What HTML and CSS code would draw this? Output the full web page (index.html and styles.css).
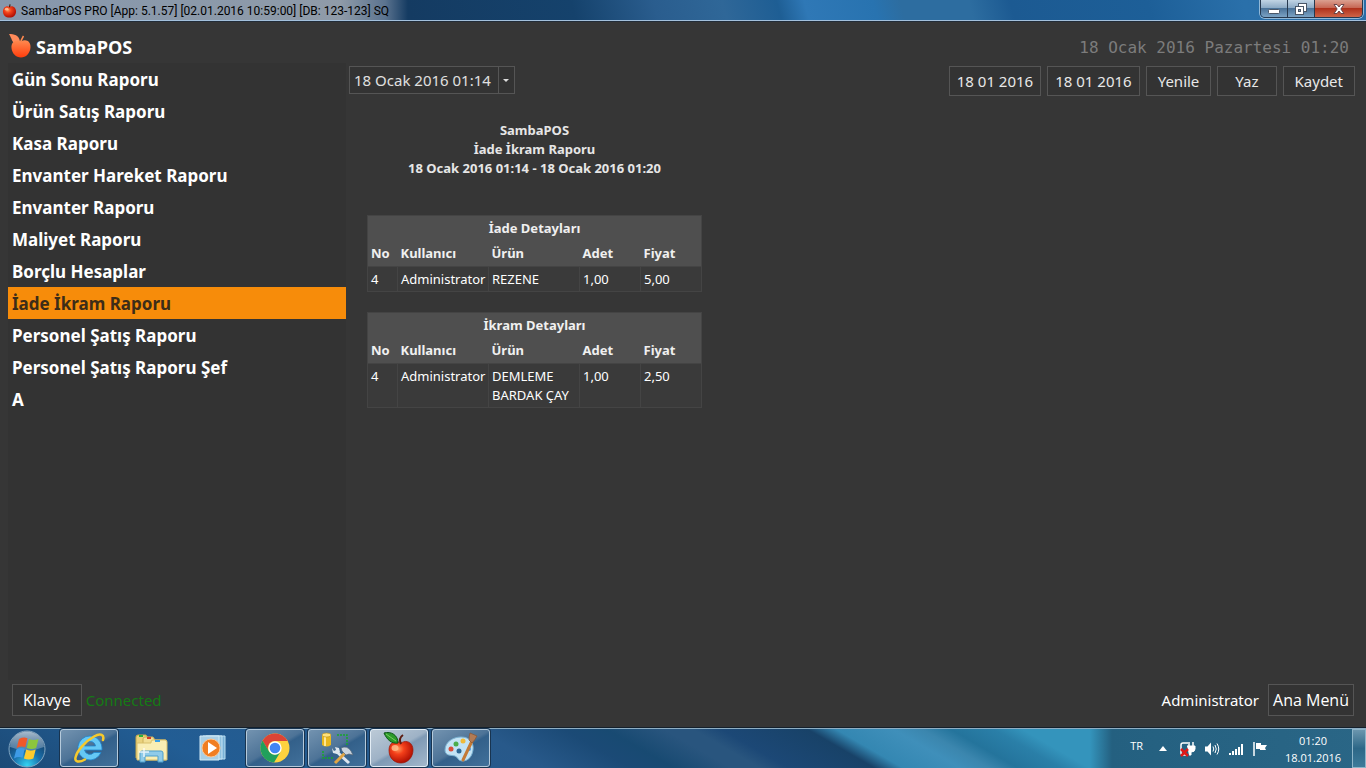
FILE: index.html
```html
<!DOCTYPE html>
<html lang="tr">
<head>
    <meta charset="UTF-8">
    <meta name="viewport" content="width=device-width, initial-scale=1.0">
    <title>SambaPOS PRO</title>
    <link rel="stylesheet" href="styles.css">
</head>
<body>

    <!-- Shared apple gradients -->
    <svg class="defs" width="0" height="0" aria-hidden="true">
        <defs>
            <radialGradient id="appleRed" cx="0.38" cy="0.35" r="0.7">
                <stop offset="0" stop-color="#ff9a5c"/>
                <stop offset="0.35" stop-color="#f4401a"/>
                <stop offset="1" stop-color="#a80a00"/>
            </radialGradient>
            <linearGradient id="appleOrange" x1="0" y1="0" x2="0" y2="1">
                <stop offset="0" stop-color="#ff8a50"/>
                <stop offset="1" stop-color="#ff3d0c"/>
            </linearGradient>
        </defs>
    </svg>

    <!-- Window Title Bar -->
    <div class="title-bar">
        <svg class="title-icon" viewBox="0 0 16 16" aria-hidden="true">
            <path d="M8 3.500C5 1.500 1 4 1 8.500c0 4 3 6.500 7 6.500s7-2.500 7-6.500C15 4 11 1.500 8 3.500z" fill="url(#appleRed)"/>
            <path d="M8 4L8.600 1" stroke="#4a1a08" stroke-width="1.200"/>
            <ellipse cx="5" cy="6" rx="2" ry="1.400" fill="#ffc9a0" opacity=".8"/>
        </svg>
        <span class="title-text">SambaPOS PRO [App: 5.1.57] [02.01.2016 10:59:00] [DB: 123-123] SQ</span>
        <div class="window-buttons">
            <button class="win-btn" aria-label="Simge durumuna küçült">
                <svg width="12" height="12" viewBox="0 0 12 12"><rect x=".5" y="6.500" width="11" height="4" rx="1" fill="#fff" stroke="#4a5768"/></svg>
            </button>
            <button class="win-btn" aria-label="Geri yükle">
                <svg width="12" height="12" viewBox="0 0 12 12"><rect x="3.500" y=".5" width="8" height="8" fill="#fff" stroke="#4a5768"/><rect x=".5" y="3.500" width="8" height="8" fill="#fff" stroke="#4a5768"/><rect x="3.500" y="6.500" width="2" height="2" fill="#8fa9c0" stroke="#4a5768"/></svg>
            </button>
            <button class="win-btn close" aria-label="Kapat">
                <svg width="12" height="12" viewBox="0 0 12 12"><path d="M1 1.500h3l2 2.500 2-2.500h3L7.800 6l3.200 4.500H8L6 8l-2 2.500H1L4.200 6z" fill="#fff" stroke="#5c3a40" stroke-width=".9"/></svg>
            </button>
        </div>
    </div>

    <!-- Application -->
    <div class="app">
        <header class="app-header">
            <div class="brand">
                <svg class="brand-icon" viewBox="0 0 24 26" aria-hidden="true">
                    <path d="M1 0c5 0 10 1 11 7.500L7 10C4 8 4 5 1 0z" fill="#ff8a5a"/>
                    <path d="M12.500 9C13 6 14 4.500 15.500 2" stroke="#ff8a50" stroke-width="1.500" fill="none"/>
                    <path d="M13 7.500c5-3 10 0 9.500 6-.5 6-4.500 10-9.500 10s-9-4-9.500-9.500C3 8 8 5 13 7.500z" fill="url(#appleOrange)"/>
                </svg>
                <span>SambaPOS</span>
            </div>
            <div class="clock">18 Ocak 2016 Pazartesi 01:20</div>
        </header>

        <div class="workspace">
            <nav class="report-list">
                <a href="#">Gün Sonu Raporu</a>
                <a href="#">Ürün Satış Raporu</a>
                <a href="#">Kasa Raporu</a>
                <a href="#">Envanter Hareket Raporu</a>
                <a href="#">Envanter Raporu</a>
                <a href="#">Maliyet Raporu</a>
                <a href="#">Borçlu Hesaplar</a>
                <a href="#" class="active">İade İkram Raporu</a>
                <a href="#">Personel Şatış Raporu</a>
                <a href="#">Personel Şatış Raporu Şef</a>
                <a href="#">A</a>
            </nav>

            <main class="content">
                <div class="toolbar">
                    <div class="period">
                        <select aria-label="Dönem">
                            <option>18 Ocak 2016 01:14</option>
                        </select>
                        <span class="period-arrow"></span>
                    </div>
                    <div class="actions">
                        <button class="btn date">18 01 2016</button>
                        <button class="btn date">18 01 2016</button>
                        <button class="btn">Yenile</button>
                        <button class="btn wide">Yaz</button>
                        <button class="btn">Kaydet</button>
                    </div>
                </div>

                <!-- Report -->
                <section class="report">
                    <div class="report-title">
                        <div>SambaPOS</div>
                        <div>İade İkram Raporu</div>
                        <div>18 Ocak 2016 01:14 - 18 Ocak 2016 01:20</div>
                    </div>

                    <table>
                        <colgroup><col class="c-no"><col class="c-mid"><col class="c-mid"><col class="c-num"><col class="c-num"></colgroup>
                        <thead>
                            <tr><th colspan="5" class="caption">İade Detayları</th></tr>
                            <tr><th>No</th><th>Kullanıcı</th><th>Ürün</th><th>Adet</th><th>Fiyat</th></tr>
                        </thead>
                        <tbody>
                            <tr><td>4</td><td>Administrator</td><td>REZENE</td><td>1,00</td><td>5,00</td></tr>
                        </tbody>
                    </table>

                    <table>
                        <colgroup><col class="c-no"><col class="c-mid"><col class="c-mid"><col class="c-num"><col class="c-num"></colgroup>
                        <thead>
                            <tr><th colspan="5" class="caption">İkram Detayları</th></tr>
                            <tr><th>No</th><th>Kullanıcı</th><th>Ürün</th><th>Adet</th><th>Fiyat</th></tr>
                        </thead>
                        <tbody>
                            <tr><td>4</td><td>Administrator</td><td>DEMLEME<br>BARDAK ÇAY</td><td>1,00</td><td>2,50</td></tr>
                        </tbody>
                    </table>
                </section>
            </main>
        </div>

        <footer class="app-footer">
            <button class="btn large">Klavye</button>
            <span class="status">Connected</span>
            <span class="user">Administrator</span>
            <button class="btn large main-menu">Ana Menü</button>
        </footer>
    </div>

    <!-- Taskbar -->
    <div class="taskbar">
        <button class="start" aria-label="Başlat">
            <svg width="40" height="38" viewBox="0 0 40 38">
                <defs>
                    <radialGradient id="orb" cx="0.5" cy="0.95" r="0.85">
                        <stop offset="0" stop-color="#35d4f2"/>
                        <stop offset="0.45" stop-color="#1a70ac"/>
                        <stop offset="1" stop-color="#14375c"/>
                    </radialGradient>
                    <linearGradient id="orbShine" x1="0" y1="0" x2="0" y2="1">
                        <stop offset="0" stop-color="#c3d4e2" stop-opacity=".85"/>
                        <stop offset="1" stop-color="#7c9fbd" stop-opacity=".5"/>
                    </linearGradient>
                </defs>
                <circle cx="20" cy="19" r="18" fill="url(#orb)" stroke="#83a7c2" stroke-width="1"/>
                <path d="M3 17a17 15.500 0 0 1 34 0q-17 7-34 0z" fill="url(#orbShine)"/>
                <path d="M12 9q4.500-2.500 8.500-.8l-2.300 9q-4.200-1.700-8.500.8z" fill="#f0592a"/>
                <path d="M22 9q4.500 2 9.500 0l-2.300 9q-4.500 2-9.500 0z" fill="#8cc63e"/>
                <path d="M9.300 19.500q4.500-2.500 8.500-.8l-2.300 9q-4.200-1.500-8.500.8z" fill="#3e9be6"/>
                <path d="M19.200 19.500q4.500 2 9.500 0l-2.300 9q-4.500 2-9.500 0z" fill="#ffcb2e"/>
            </svg>
        </button>

        <div class="tasks">
            <button class="task open" aria-label="Internet Explorer">
                <svg width="32" height="32" viewBox="0 0 32 32">
                    <path d="M17 4a12 12 0 1 0 11 16.500h-7a5.500 5.500 0 0 1-9.500-2.500H29C29.500 10 24 4 17 4zm0 5.500a5.500 5.500 0 0 1 5.500 4.500h-11A5.500 5.500 0 0 1 17 9.500z" fill="#65c8f5" stroke="#2187cf" stroke-width=".8"/>
                    <path d="M30 8C31.500 3 28 .5 21 4.500 12 9.500 4 19 2.500 25.500 1.500 30 6 31 12 27.500" fill="none" stroke="#f6c92c" stroke-width="2.500" stroke-linecap="round"/>
                </svg>
            </button>
            <button class="task" aria-label="Dosya Gezgini">
                <svg width="34" height="30" viewBox="0 0 34 30">
                    <path d="M2 4q0-2 2-2h8l2 3v20H2z" fill="#ead27c" stroke="#c4a649"/>
                    <path d="M9 6q0-2 2-2h8l2 3h11v20H9z" fill="#f2df95" stroke="#cbb05a"/>
                    <path d="M17 9q0-2 2-2h12q2 0 2 2v18H3V10h14z" fill="#f9eeb4" stroke="#d9c06c"/>
                    <rect x="5" y="2" width="4" height="2" fill="#28b23c"/>
                    <rect x="13" y="4" width="4" height="2" fill="#d43a28"/>
                    <rect x="21" y="7" width="5" height="2" fill="#3aa0e6"/>
                    <path d="M6 29v-9q0-2 2-2h19q2 0 2 2v9h-5v-6H11v6z" fill="#8fcbe9" stroke="#4f9fcb"/>
                    <path d="M10 15v9M5 19h10" stroke="#fff" stroke-width="1.500" opacity=".8"/>
                </svg>
            </button>
            <button class="task" aria-label="Media Player">
                <svg width="30" height="28" viewBox="0 0 30 28">
                    <path d="M8 2h19v23H8z" fill="#79b1d6" stroke="#b9def2"/>
                    <path d="M5 2h19v23H5z" fill="#8dc0df" stroke="#c4e4f5"/>
                    <path d="M2 2h19v24H2z" fill="#a8cfe6" stroke="#d2ebf7"/>
                    <circle cx="13" cy="14" r="9" fill="#f07e22" stroke="#fbc795"/>
                    <path d="M10 8l9 6-9 6z" fill="#fff"/>
                </svg>
            </button>
            <button class="task open" aria-label="Chrome">
                <svg width="30" height="30" viewBox="0 0 30 30">
                    <circle cx="15" cy="15" r="14.500" fill="#fdd23f"/>
                    <path d="M2.500 7.500A14.500 14.500 0 0 1 27.600 8H15a7 7 0 0 0-6.500 10z" fill="#db4437"/>
                    <path d="M2.500 7.500A14.500 14.500 0 0 0 14 29.500l6.500-10.800a7 7 0 0 1-11.700-.7z" fill="#21a05c"/>
                    <circle cx="15" cy="15" r="6.700" fill="#fff"/>
                    <circle cx="15" cy="15" r="5.300" fill="#4285f4"/>
                </svg>
            </button>
            <button class="task open" aria-label="Yapılandırma">
                <svg width="34" height="34" viewBox="0 0 34 34">
                    <path d="M17 4h10v11M3 20v7h11" fill="none" stroke="#19a52c" stroke-width="1.500" stroke-dasharray="2 1"/>
                    <path d="M2 4v10q4.500 3 9 0V4z" fill="#e9b81f"/>
                    <path d="M4 5v10h2V5z" fill="#ffe793"/>
                    <ellipse cx="6.500" cy="4" rx="4.500" ry="2" fill="#ffe27b" stroke="#b98c14" stroke-width=".6"/>
                    <path d="M17 21l12 11" stroke="#dce5ee" stroke-width="3"/>
                    <path d="M12 17l1 5 4 1 3-2-1-4-4-1 1 3-2 1z" fill="#dce5ee"/>
                    <path d="M26 21L15 32" stroke="#e0a545" stroke-width="3"/>
                    <path d="M21 17q6-3 10 3l2 4-4-1-3 1-4-4z" fill="#c9d4de" stroke="#536475" stroke-width=".7"/>
                </svg>
            </button>
            <button class="task open current" aria-label="SambaPOS">
                <svg width="32" height="34" viewBox="0 0 32 34">
                    <path d="M18 12C12 8 6 12 6 19c0 8 5 13 12 13s12-6 12-13c0-7-6-11-12-7z" fill="url(#appleRed)" stroke="#9c1405" stroke-width=".7"/>
                    <path d="M18 13C16 9 17 6 20 4" stroke="#5c1c10" stroke-width="2" fill="none"/>
                    <path d="M1 2c7-2 14 2 14 10C9 13 4 9 1 2z" fill="#2c9a2b" stroke="#0c5315"/>
                    <path d="M3 3l10 7" stroke="#79ce60"/>
                    <ellipse cx="12" cy="17" rx="3.500" ry="3" fill="#ffc08e" opacity=".8"/>
                </svg>
            </button>
            <button class="task open" aria-label="Paint">
                <svg width="34" height="32" viewBox="0 0 34 32">
                    <path d="M1 18C1 10 9 5 17 5c9 0 13 6 12 13-1 6-4 11-11 11-4 0-4-4-7-5-4-1-10 0-10-6z" fill="#c3e3f5" stroke="#7bb3d3"/>
                    <circle cx="7" cy="17" r="2.500" fill="#da4d3b"/>
                    <circle cx="12" cy="12" r="2.500" fill="#4cad4c"/>
                    <circle cx="19" cy="9" r="2.500" fill="#f0ba39"/>
                    <circle cx="15" cy="19" r="2.500" fill="#2c6694"/>
                    <circle cx="25" cy="17" r="2" fill="#4b9be0"/>
                    <path d="M28 9L19 28" stroke="#c47a36" stroke-width="3" stroke-linecap="round"/>
                    <path d="M28 11l-3-3q0-4 1-7l7 3q-2 4-5 7z" fill="#b27b55" stroke="#8a5431" stroke-width=".7"/>
                </svg>
            </button>
        </div>

        <div class="tray">
            <span class="lang">TR</span>
            <svg class="tray-more" width="8" height="5" viewBox="0 0 8 5" aria-hidden="true"><path d="M4 0l4 5H0z" fill="#fff"/></svg>
            <svg width="16" height="16" viewBox="0 0 16 16" aria-hidden="true">
                <path d="M8 2H3q-2 0-2 2v8q0 2 2 2h5" fill="none" stroke="#fff" stroke-width="1.500"/>
                <path d="M9 1v4M13 1v4" stroke="#fff" stroke-width="1.500"/>
                <path d="M7 5h8v3q0 3-4 3v3H9" fill="#fff" stroke="#fff"/>
                <path d="M1 8l7 7M8 8l-7 7" stroke="#e01818" stroke-width="2.500"/>
            </svg>
            <svg width="16" height="16" viewBox="0 0 16 16" aria-hidden="true">
                <path d="M1 5.500h2.500L7 1.500v13l-3.500-4H1z" fill="#fff"/>
                <path d="M9 5.500q1.500 2.500 0 5M11 4q2.500 4 0 8M13 2.500q3.500 5.500 0 11" fill="none" stroke="#fff"/>
            </svg>
            <svg width="16" height="16" viewBox="0 0 16 16" aria-hidden="true">
                <path d="M1 12h2v2H1zM4 10h2v4H4zM7 8h2v6H7zM10 6h2v8h-2zM13 3h2v11h-2z" fill="#fff"/>
            </svg>
            <svg width="16" height="16" viewBox="0 0 16 16" aria-hidden="true">
                <path d="M2 1v14" stroke="#fff" stroke-width="1.500"/>
                <path d="M4 2h5v2h6l-2 3 1 2H8V8H4z" fill="#fff"/>
            </svg>
            <div class="tray-clock">
                <div>01:20</div>
                <div>18.01.2016</div>
            </div>
            <button class="show-desktop" aria-label="Masaüstünü göster"></button>
        </div>
    </div>

</body>
</html>
```

FILE: styles.css
```css
* {
    box-sizing: border-box;
}

body {
    font-family: "Noto Sans", "Open Sans", sans-serif;
    margin: 0;
    height: 100vh;
    display: flex;
    flex-direction: column;
    background: #363636;
    color: #fff;
    overflow: hidden;
}

button,
select {
    font-family: inherit;
    color: inherit;
    margin: 0;
    padding: 0;
}

svg {
    display: block;
    flex: none;
}

.defs {
    position: absolute;
}

/* Window Title Bar */
.title-bar {
    display: flex;
    align-items: flex-start;
    height: 21px;
    flex: none;
    padding: 0 3px 0 2px;
    border-bottom: 1px solid #a3c0dc;
    background:
        linear-gradient(to right, rgba(140, 156, 176, 0.95), rgba(150, 160, 172, 0.95) 340px, rgba(110, 130, 155, 0.8) 385px, rgba(20, 59, 98, 0) 408px),
        linear-gradient(75deg, #143b62 0, #143b62 30%, #15426c 42%, #2a5d8e 48%, #2f6798 53%, #1e5e94 57%, #2f78b6 59%, #2873b0 64%, #2d6da0 66%, #2d6da0 71%, #1c5a92 74%, #1d5f98 84%, #2a70aa 91%, #2a6ca6 100%);
}

.title-icon {
    width: 15px;
    height: 16px;
    margin: 3px 4px 0 0;
}

.title-text {
    flex: 1;
    font-family: Roboto, sans-serif;
    font-size: 12px;
    line-height: 22px;
    color: #000;
}

.window-buttons {
    display: flex;
    height: 18px;
    border: 1px solid #26394f;
    border-top: 0;
    border-radius: 0 0 5px 5px;
    box-shadow: 0 0 0 1px rgba(190, 215, 235, 0.7);
    overflow: hidden;
}

.win-btn {
    display: flex;
    align-items: center;
    justify-content: center;
    width: 27px;
    border: 0;
    border-right: 1px solid #26394f;
    background: linear-gradient(#c1d4e4, #8dabc6 45%, #4b7399 50%, #7ba2c4);
}

.win-btn.close {
    width: 47px;
    border-right: 0;
    background: linear-gradient(#dba090, #c76855 45%, #b0321c 50%, #cd6448);
}

/* Application */
.app {
    flex: 1;
    min-height: 0;
    display: flex;
    flex-direction: column;
    padding: 0 8px;
    border-top: 1px solid #222c38;
}

.app-header {
    display: flex;
    justify-content: space-between;
    align-items: center;
    height: 41px;
    padding: 9px 9px 0 0;
}

.brand {
    display: flex;
    align-items: center;
    gap: 4px;
    font-family: "Open Sans", sans-serif;
    font-size: 18px;
    font-weight: bold;
}

.brand-icon {
    width: 24px;
    height: 26px;
}

.clock {
    font-family: "DejaVu Sans Mono", monospace;
    font-size: 16px;
    color: #7c7c7c;
}

.workspace {
    flex: 1;
    display: flex;
    min-height: 0;
}

.report-list {
    width: 338px;
    flex: none;
    background: #333;
}

.report-list a {
    display: block;
    height: 32px;
    line-height: 33px;
    padding: 0 4px;
    font-size: 17px;
    font-weight: bold;
    color: #fff;
    text-decoration: none;
}

.report-list a.active {
    background: #f78c0a;
    color: #3d2c18;
}

.content {
    flex: 1;
    padding: 3px 3px 0;
}

.toolbar {
    display: flex;
    justify-content: space-between;
    align-items: flex-start;
}

.period {
    position: relative;
}

.period select {
    appearance: none;
    display: block;
    width: 166px;
    height: 28px;
    padding: 0 4px;
    border: 1px solid #555;
    border-radius: 0;
    background: #333;
    font-family: "Noto Sans", sans-serif;
    font-size: 15px;
    color: #e0e0e0;
}

.period-arrow {
    position: absolute;
    top: 0;
    right: 0;
    width: 17px;
    height: 28px;
    border: 1px solid #555;
    pointer-events: none;
}

.period-arrow::after {
    content: "";
    position: absolute;
    top: 12px;
    left: 4px;
    border: 3px solid transparent;
    border-top-color: #ddd;
    border-bottom: 0;
}

.actions {
    display: flex;
    gap: 6px;
}

.btn {
    height: 30px;
    padding: 0 11px;
    border: 1px solid #555;
    background: #333;
    font-family: "Noto Sans", sans-serif;
    font-size: 15px;
    color: #e8e8e8;
    white-space: nowrap;
}

.btn.date {
    padding: 0 7px;
}

.btn.wide {
    padding: 0 17px;
}

/* Report */
.report {
    width: 335px;
    margin: 25px 0 0 18px;
    font-size: 13px;
}

.report-title {
    margin-bottom: 37px;
    font-weight: bold;
    line-height: 19px;
    text-align: center;
    color: #e6e6e6;
    white-space: nowrap;
}

table {
    width: 100%;
    margin-bottom: 20px;
    border-collapse: collapse;
    table-layout: fixed;
    border: 1px solid #444;
    line-height: 19px;
}

.c-no {
    width: 30px;
}

.c-mid {
    width: 91px;
}

.c-num {
    width: 61px;
}

th {
    padding: 3px;
    background: #4f4f4f;
    text-align: left;
    color: #f0f0f0;
}

th.caption {
    text-align: center;
}

td {
    padding: 3px 3px 2px;
    border: 1px solid #444;
    background: #3a3a3a;
    vertical-align: top;
    white-space: nowrap;
}

/* Footer */
.app-footer {
    display: flex;
    align-items: center;
    height: 48px;
    padding: 4px 4px 12px;
    font-size: 15px;
}

.btn.large {
    height: 32px;
    padding: 0 10px;
    font-family: "Open Sans", sans-serif;
    font-size: 16px;
    color: #fff;
}

.btn.main-menu {
    padding: 0 4px;
}

.status {
    flex: 1;
    margin-left: 4px;
    color: #157a15;
}

.user {
    margin-right: 9px;
}

/* Taskbar */
.taskbar {
    display: flex;
    height: 40px;
    flex: none;
    border-top: 1px solid #8eaec4;
    box-shadow: 0 -1px 0 #14202c;
    background:
        linear-gradient(to right, transparent 1090px, #246080 1112px, #2a6686),
        linear-gradient(30deg, #1c4a76 0, #225d94 15%, #28598a 38%, #1b4a76 44%, #184a72 47%, #29557e 51%, #29557e 53%, #1c4876 55%, #184268 61%, #3487b2 63%, #3f8fba 67%, #3b86ae 69%, #24749c 71%, #2a7fa8 74%, #3494bc 76%, #3494bc 100%);
}

.start {
    width: 40px;
    margin: 0 13px 0 7px;
    border: 0;
    background: none;
}

.tasks {
    flex: 1;
    display: flex;
    gap: 4px;
}

.task {
    display: flex;
    align-items: center;
    justify-content: center;
    width: 58px;
    height: 38px;
    border: 1px solid transparent;
    border-radius: 3px;
    background: none;
}

.task.open {
    border-color: #b5cadb;
    background: linear-gradient(150deg, #7393b0, #4d7397 48%, #33608a 54%, #41709a);
    box-shadow: 0 0 0 1px #183450;
}

.task.current {
    border-color: #e3edf5;
    background: linear-gradient(150deg, #bccad7, #9eb2c6 48%, #7f9ab5 54%, #a3b7cb);
}

.tray {
    display: flex;
    align-items: center;
    gap: 8px;
    font-family: "Open Sans", sans-serif;
    font-size: 11px;
}

.lang {
    margin: 0 8px 6px 0;
}

.tray-more {
    margin-right: 5px;
}

.tray-clock {
    width: 62px;
    margin-left: 6px;
    line-height: 17px;
    text-align: center;
}

.show-desktop {
    width: 14px;
    height: 39px;
    border: 1px solid #8db5c9;
    background: linear-gradient(#6b96ae, #2d6787 50%, #3d7b9a);
}
```
